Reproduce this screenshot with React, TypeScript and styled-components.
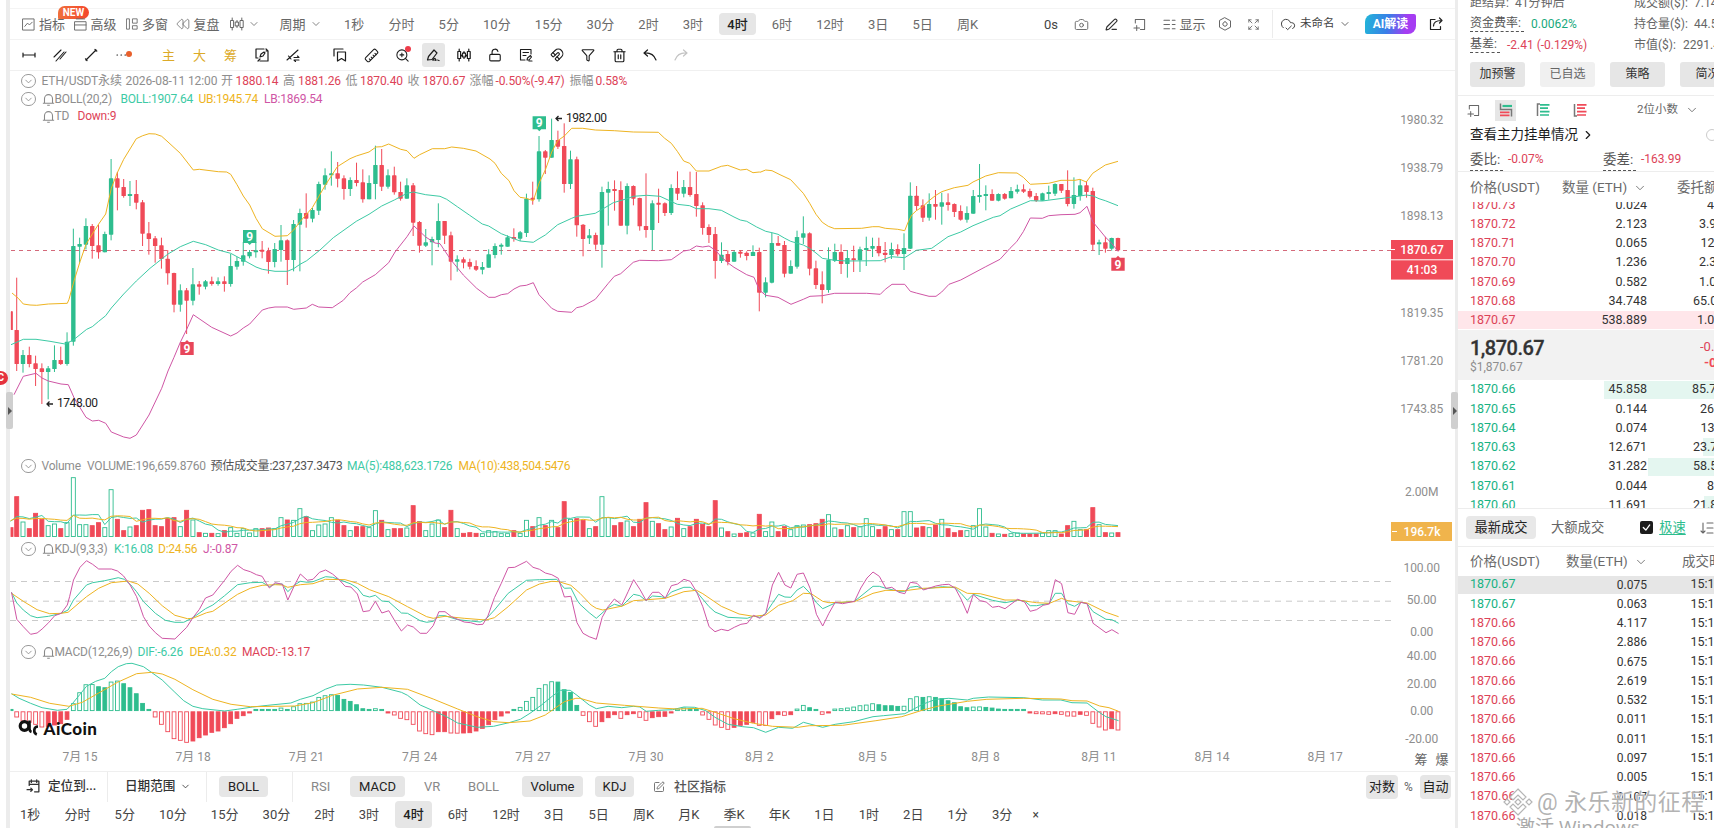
import React from "react";
import styled, { createGlobalStyle, css } from "styled-components";
import {
  Camera, ChevronDown, ChevronRight, CloudCheck, Funnel, LockOpen, Magnet, PenLine,
  Ruler, SquarePen, Trash2, ZoomIn, Rewind,
} from "lucide-react";

const GREEN = "#2ebd8e";
const RED = "#f04a58";
const TEXT_RED = "#dd4358";
const GOLD = "#eeb422";
const MINT = "#3dcaa5";
const PINK = "#cf56a5";
const GREY = "#8e8e8e";

const GlobalStyle = createGlobalStyle`
  * { box-sizing: border-box; }
  body {
    margin: 0;
    background: #fff;
    color: #333;
    font: 13px/1 Roboto, "Noto Sans CJK SC", sans-serif;
    white-space: nowrap;
    overflow: hidden;
  }
  svg { flex: none; }
`;

/* ---------- page frame ---------- */
const Page = styled.div`
  position: relative;
  display: flex;
  width: 1714px;
  height: 828px;
  overflow: hidden;
`;
const Rail = styled.div<{ $w: number }>`
  flex: none;
  width: ${(p) => p.$w}px;
`;
const Splitter = styled.div<{ $w: number }>`
  flex: none;
  width: ${(p) => p.$w}px;
  background: #ececec;
`;
const Main = styled.main`
  display: flex;
  flex-direction: column;
  width: 1445px;
  flex: none;
`;
const Handle = styled.div<{ $x: number }>`
  position: absolute;
  left: ${(p) => p.$x}px;
  top: 392px;
  width: 7px;
  height: 37px;
  border-radius: 2px;
  background: #cfcfcf;
  display: grid;
  place-items: center;
  &::after {
    content: "";
    border-left: 4px solid #555;
    border-top: 4px solid transparent;
    border-bottom: 4px solid transparent;
  }
`;
const EdgeBadge = styled.div`
  position: absolute;
  left: -7px;
  top: 371px;
  width: 15px;
  height: 14px;
  border-radius: 50%;
  background: #e5323e;
  color: #fff;
  font-weight: 700;
  font-size: 10px;
  line-height: 14px;
  text-align: right;
  padding-right: 4px;
`;

/* ---------- toolbars ---------- */
const TopBar = styled.div`
  display: flex;
  align-items: center;
  height: 31px;
  margin-top: 8px;
  border-top: 1px solid #f4f4f4;
  color: #666;
`;
const Tool = styled.div<{ $w: number; $c?: string; $pl?: number; $fs?: number }>`
  display: flex;
  align-items: center;
  position: relative;
  flex: none;
  width: ${(p) => p.$w}px;
  padding-left: ${(p) => p.$pl || 0}px;
  font-size: ${(p) => p.$fs || 13}px;
  gap: 4px;
  color: ${(p) => p.$c || "inherit"};
`;
const NewTag = styled.span`
  position: absolute;
  left: 48px;
  top: -12px;
  width: 31px;
  height: 13px;
  border-radius: 7px 7px 7px 1px;
  background: linear-gradient(90deg, #f0703c, #f4472c);
  color: #fff;
  font: 700 10px/13px Roboto, sans-serif;
  text-align: center;
`;
const Period = styled.span<{ $on?: boolean; $h: number }>`
  display: flex;
  align-items: center;
  flex: none;
  height: ${(p) => p.$h}px;
  padding: 0 8px;
  border-radius: 4px;
  ${(p) => p.$on && css`background: #e6e6e6; color: #222; font-weight: 500;`}
`;
const Close = styled.span`
  margin-left: 4px;
  font-size: 12px;
`;
const Periods = styled.div<{ $w?: number; $c: string }>`
  display: flex;
  align-items: center;
  gap: 8.15px;
  color: ${(p) => p.$c};
  ${(p) => p.$w && css`width: ${p.$w}px; flex: none;`}
`;
const AiButton = styled.span`
  width: 51px;
  height: 20px;
  border-radius: 8px 2px 8px 2px;
  background: linear-gradient(100deg, #21b6d8, #3a7de8 45%, #a53df2 80%);
  color: #fff;
  font: 700 12px/20px Roboto, "Noto Sans CJK SC", sans-serif;
  text-align: center;
`;
const VRule = styled.i<{ $h: number }>`
  flex: none;
  width: 1px;
  height: ${(p) => p.$h}px;
  background: #ececec;
`;
const DrawBar = styled.div`
  display: flex;
  align-items: center;
  height: 32px;
  padding-left: 3.5px;
  border-top: 1px solid #f2f2f2;
  border-bottom: 1px solid #f0f0f0;
  color: #1c1c1c;
`;
const Slot = styled.span<{ $after?: number; $c?: string }>`
  position: relative;
  display: grid;
  place-items: center;
  width: 31px;
  flex: none;
  margin-right: ${(p) => p.$after || 0}px;
  color: ${(p) => p.$c || "inherit"};
`;
const ActiveSlot = styled.span`
  display: grid;
  place-items: center;
  width: 23px;
  height: 24px;
  border-radius: 3px;
  background: #e6e6e6;
`;
const Turned = styled.span`
  display: grid;
  transform: rotate(90deg);
`;
const Dot = styled.i<{ $x: number; $y: number; $c: string }>`
  position: absolute;
  left: ${(p) => p.$x}px;
  top: ${(p) => p.$y}px;
  width: 6px;
  height: 6px;
  border-radius: 50%;
  background: ${(p) => p.$c};
`;

/* ---------- chart ---------- */
const ChartArea = styled.section`
  position: relative;
  height: 700px;
  svg.plot { display: block; }
`;
const Legend = styled.div<{ $top: number; $tight?: boolean }>`
  position: absolute;
  left: 11px;
  top: ${(p) => p.$top}px;
  height: 16px;
  display: flex;
  align-items: center;
  font-size: 12px;
  letter-spacing: ${(p) => (p.$tight ? -0.22 : -0.1)}px;
`;
const LegendToggle = styled.span<{ $hidden?: boolean }>`
  flex: none;
  width: 14.5px;
  height: 14.5px;
  margin-right: 6px;
  border: 1px solid #9a9a9a;
  border-radius: 50%;
  display: grid;
  place-items: center;
  color: #888;
  visibility: ${(p) => (p.$hidden ? "hidden" : "visible")};
`;
const LegendText = styled.span<{ $w: number; $c?: string }>`
  width: ${(p) => p.$w}px;
  flex: none;
  color: ${(p) => p.$c || GREY};
`;

/* ---------- footer ---------- */
const FooterRow = styled.div`
  display: flex;
  align-items: center;
  height: 30px;
  border-top: 1px solid #efefef;
  color: #888;
`;
const Cell = styled.span<{ $w: number; $c?: string; $b?: boolean; $pl?: number; $fs?: number; $gap?: number }>`
  display: flex;
  align-items: center;
  flex: none;
  gap: ${(p) => p.$gap || 6}px;
  width: ${(p) => p.$w}px;
  padding-left: ${(p) => p.$pl || 0}px;
  color: ${(p) => p.$c || "inherit"};
  font-weight: ${(p) => (p.$b ? 500 : 400)};
  ${(p) => p.$fs && css`font-size: ${p.$fs}px;`}
`;
const Pill = styled.span<{ $w: number; $h?: number; $after?: number }>`
  display: grid;
  place-items: center;
  flex: none;
  width: ${(p) => p.$w}px;
  height: ${(p) => p.$h || 21}px;
  margin-right: ${(p) => p.$after || 0}px;
  border-radius: 4px;
  background: #e6e6e6;
  color: #222;
`;
const PeriodRow = styled.div`
  display: flex;
  align-items: center;
  height: 27px;
  padding-left: 2px;
`;
const BottomGrip = styled.div`
  position: absolute;
  left: 714px;
  top: 826px;
  width: 37px;
  height: 4px;
  border-radius: 2px;
  background: #cfcfcf;
`;

/* ---------- sidebar ---------- */
const Side = styled.aside`
  display: flex;
  flex-direction: column;
  flex: none;
  width: 256px;
  overflow: hidden;
`;
const Stats = styled.div`
  flex: none;
  height: 54px;
  padding: 0 0 0 12px;
  font-size: 12px;
  color: #666;
  overflow: hidden;
`;
const StatLine = styled.div<{ $h: number }>`
  display: flex;
  align-items: flex-end;
  height: ${(p) => p.$h}px;
  padding-bottom: 1px;
`;
const StatCol = styled.span<{ $w: number; $c?: string; $lh?: number }>`
  flex: none;
  width: ${(p) => p.$w}px;
  color: ${(p) => p.$c || "inherit"};
  line-height: ${(p) => p.$lh || 16}px;
`;
const Dashed = styled.span<{ $fs?: number; $lh?: number }>`
  display: block;
  width: fit-content;
  font-size: ${(p) => p.$fs || 12}px;
  line-height: ${(p) => p.$lh || 16}px;
  padding-right: 3px;
  border-bottom: 1px dashed #555;
  color: #555;
`;
const Actions = styled.div`
  display: flex;
  flex: none;
  gap: 15px;
  padding: 8px 0 0 12px;
  height: 41px;
`;
const Action = styled.span<{ $pale?: boolean }>`
  flex: none;
  width: 55px;
  height: 25px;
  border-radius: 3px;
  background: ${(p) => (p.$pale ? "#f0f0f0" : "#e6e6e6")};
  color: ${(p) => (p.$pale ? "#666" : "#333")};
  font-size: 12px;
  line-height: 25px;
  text-align: center;
`;
const DepthBar = styled.div`
  display: flex;
  flex: none;
  align-items: center;
  height: 29px;
  padding-left: 9px;
  border-top: 1px solid #ededed;
  color: #666;
  font-size: 12px;
`;
const DepthIcon = styled.span<{ $on?: boolean }>`
  display: grid;
  place-items: center;
  flex: none;
  width: 21px;
  height: 21px;
  margin-right: 16px;
  background: ${(p) => (p.$on ? "#e6e6e6" : "transparent")};
`;
const MainForce = styled.div`
  display: flex;
  flex: none;
  align-items: center;
  height: 22px;
  padding-left: 12px;
  gap: 3px;
  color: #1c1c1c;
  font-size: 13.5px;
`;
const Hint = styled.i`
  flex: none;
  margin-left: 108px;
  width: 12px;
  height: 12px;
  border: 1px solid #ccc;
  border-radius: 50%;
`;
const Ratio = styled.div`
  display: flex;
  flex: none;
  align-items: flex-end;
  height: 26px;
  padding-left: 12px;
  font-size: 12px;
  color: ${TEXT_RED};
  border-bottom: 1px solid #ededed;
`;
const ColHead = styled.div<{ $h: number }>`
  display: flex;
  flex: none;
  align-items: center;
  height: ${(p) => p.$h}px;
  padding: 2px 0 0 12px;
  color: #6a6a6a;
  font-size: 13.5px;
`;
const Rows = styled.div<{ $h: number; $end?: boolean }>`
  display: flex;
  flex-direction: column;
  justify-content: ${(p) => (p.$end ? "flex-end" : "flex-start")};
  height: ${(p) => p.$h}px;
  flex: none;
  overflow: hidden;
`;
const Row = styled.div<{ $bg?: string; $from?: number }>`
  display: flex;
  align-items: center;
  flex: none;
  height: 19.28px;
  padding-left: 12px;
  font-size: 12.5px;
  color: #333;
  background: ${(p) => (p.$bg ? `linear-gradient(${p.$bg},${p.$bg}) ${p.$from || 0}px 50% / 256px 18px no-repeat` : "none")};
`;
const Price = styled.span<{ $up?: boolean }>`
  flex: none;
  width: 77px;
  color: ${(p) => (p.$up ? "#17b283" : TEXT_RED)};
`;
const Amount = styled.span<{ $small?: boolean }>`
  flex: none;
  width: 100px;
  text-align: right;
  font-size: ${(p) => (p.$small ? 12 : 12.5)}px;
`;
const Tail = styled.span<{ $x: number }>`
  flex: none;
  margin-left: ${(p) => p.$x}px;
`;
const Last = styled.div`
  display: flex;
  justify-content: space-between;
  align-items: center;
  height: 50px;
  flex: none;
  padding-left: 12px;
  background: #f2f2f2;
`;
const LastPrice = styled.div`
  font-size: 20px;
  font-weight: 500;
  letter-spacing: -0.5px;
  color: #333;
  -webkit-text-stroke: 0.3px #333;
  small {
    display: block;
    margin-top: 3px;
    font-size: 12px;
    font-weight: 400;
    letter-spacing: 0;
    color: #8e8e8e;
    -webkit-text-stroke: 0;
  }
`;
const Change = styled.div`
  width: 14px;
  overflow: hidden;
  color: ${TEXT_RED};
  font-size: 13px;
  line-height: 16px;
  b { display: block; padding-left: 4px; color: ${RED}; }
`;
const Tabs = styled.div`
  display: flex;
  align-items: center;
  height: 39px;
  flex: none;
  padding-left: 8px;
  border-top: 1px solid #ededed;
  border-bottom: 1px solid #ededed;
  color: #666;
  font-size: 13.3px;
`;
const Tab = styled.span`
  width: 70px;
  height: 23px;
  margin-right: 15px;
  border-radius: 4px;
  background: #e8e8e8;
  color: #222;
  line-height: 23px;
  text-align: center;
`;
const Check = styled.span`
  width: 13px;
  height: 13px;
  margin: 0 6px 0 36px;
  border-radius: 2px;
  background: #1c1c1c;
  color: #fff;
  display: grid;
  place-items: center;
`;
const Speed = styled.u`
  color: ${GREEN};
  text-decoration-thickness: 1px;
  text-underline-offset: 2px;
  margin-right: 14px;
`;
const Watermark = styled.div`
  position: absolute;
  left: 1503px;
  top: 788px;
  display: flex;
  align-items: center;
  gap: 4px;
  height: 28px;
  color: rgba(165, 165, 165, 0.85);
  font-size: 23px;
  letter-spacing: 0.4px;
  text-shadow: 0 0 1px #fff, 1px 1px 1px rgba(255, 255, 255, 0.9);
`;
const SystemMark = styled.div`
  position: absolute;
  left: 1516px;
  top: 815px;
  color: #aaa;
  font: 19px/24px "Open Sans", "Noto Sans CJK SC", sans-serif;
`;

/* ---------- small drawings ---------- */
const Glyph = ({ d, s = 14, w = 1.2, box = 14 }: { d: string; s?: number; w?: number; box?: number }) => (
  <svg width={s} height={s} viewBox={`0 0 ${box} ${box}`} fill="none" stroke="currentColor" strokeWidth={w} strokeLinecap="round" strokeLinejoin="round">
    <path d={d} />
  </svg>
);
const CANDLES_ICON = "M2.200 1v2.500M2.200 10.500V13M.8 3.500h2.800v7H.8zM7 3.500V5M7 9v1.500M5.600 5h2.800v4H5.600zM11.800 1v2.500M11.800 10.500V13M10.400 3.500h2.800v7h-2.800z";
const FRAME_ICON = "M2.500 5.500V1.500h10v11H8M4 8v5.500M1 10.700h6";
const Bell = () => (
  <svg width="13" height="13" viewBox="0 0 12 12" fill="none" stroke="#888" strokeWidth="1">
    <path d="M.8 9.500h10.400M2.300 9.500V5.200a3.700 3.700 0 0 1 7.400 0v4.300M4.800 11.300h2.400" />
  </svg>
);
const Toggle = ({ hidden }: { hidden?: boolean }) => (
  <LegendToggle $hidden={hidden}><ChevronDown size={11} strokeWidth={1.800} /></LegendToggle>
);

/* ---------- chart data ---------- */
const X0 = 16.7;
const STEP = 6.293;
const xAt = (i: number) => X0 + STEP * i;

// direction, high, body top, body bottom, low; thirds of a pixel below the pane's top
const CANDLES = `r664,664,720,720 r563,720,822,843 g780,795,822,848 r770,795,822,832 r797,820,837,888 r820,835,846,942 g828,835,846,928 g766,810,837,846 r770,810,822,825 g727,755,822,827 g416,468,755,767
g443,462,470,518 g385,408,464,478 r402,408,468,506 r404,466,487,506 g425,432,487,487 g207,265,434,451 r246,265,293,361 r267,291,318,323 g273,312,317,348 r270,312,338,358
r330,337,431,468 r396,430,447,494 r438,445,468,518 r443,466,507,536 r480,506,550,584 r548,549,644,667 g583,601,644,665 r594,601,632,732 g534,583,632,646 r573,583,590,614
g570,574,590,598 r560,574,582,587 g562,574,582,587 r559,574,582,605 g492,528,582,590 g501,513,530,539 g456,496,515,527 g480,486,499,505 g456,481,487,503 r453,479,485,505
r473,483,516,551 g459,477,516,532 g405,451,480,515 r448,451,510,585 g390,402,510,544 g356,369,404,544 r310,369,386,413 g354,360,386,397 g275,282,362,375 g235,256,284,299
g184,250,256,287 r216,250,266,292 r256,265,297,329 g262,270,297,318 r218,270,279,289 r238,277,328,338 g256,279,328,328 g167,225,282,328 r177,225,290,303 g238,256,290,296
r230,256,307,314 r275,306,326,332 g265,286,326,326 r279,286,398,438 r393,396,467,488 g417,457,467,471 g440,447,457,526 g340,393,450,472 r393,393,437,462 r425,436,515,571
g496,508,515,545 r502,508,518,535 r506,516,530,538 r511,528,539,543 g516,531,539,553 g478,493,533,533 g460,468,495,505 g460,464,469,494 g436,442,470,470 r415,441,446,455
g423,427,446,453 g311,326,429,441 r275,323,329,344 g138,184,328,335 r180,184,203,252 g86,150,203,203 r122,150,170,177 r100,168,282,308 g182,208,282,297 r200,208,406,440
r402,404,447,499 g417,436,445,462 r428,435,464,479 g290,306,464,533 g275,297,308,407 r271,297,302,362 r274,300,407,407 g280,288,407,433 r286,288,326,346 r323,324,409,422
r250,408,420,443 g331,340,420,480 r296,338,343,399 r337,340,369,378 g283,294,369,375 r244,294,311,330 g270,291,311,322 r245,291,315,320 r246,312,348,380 r337,346,414,434
r403,411,435,459 r411,432,513,566 g457,494,513,519 r481,492,516,526 g482,486,515,515 r480,485,490,503 r484,488,498,511 g466,486,498,498 r473,486,608,664 g562,577,608,622
g429,459,578,580 r438,459,467,467 r453,465,551,562 g511,528,551,551 g422,441,530,536 g379,430,443,462 r427,430,536,556 r512,535,585,597 r544,583,600,640 g472,510,600,608
g461,486,512,516 r463,486,522,552 g480,504,522,563 r467,505,511,546 g470,478,511,546 g440,474,479,528 g443,468,476,501 r443,468,490,499 r456,488,495,517 g458,477,495,507
r463,477,493,499 g430,474,492,540 g277,317,476,477 r288,317,348,361 r328,346,383,396 g310,342,383,392 r300,342,350,389 g308,337,350,404 r310,337,345,362 r340,342,366,381
r346,363,389,392 g349,369,389,398 g300,318,371,371 g222,315,320,338 g286,312,317,361 r298,312,332,332 g310,312,332,334 r309,312,326,329 g291,303,325,325 g284,298,305,311
r283,298,305,309 r296,303,320,325 r309,318,332,336 g308,310,332,332 g287,306,311,329 g280,282,311,318 r282,282,302,309 r241,300,342,349 g262,315,342,356 g268,286,318,332
r274,286,306,323 r293,303,464,480 g449,457,463,495 r441,457,476,488 g443,444,476,482 r443,444,481,484`
  .split(/\s+/)
  .map((t, k) => ({ i: k - 1, up: t[0] === "g", v: t.slice(1).split(",").map(Number) }));

// bar heights in thirds of a pixel
const VOLUME = [
  28, 121, 45, 25, 71, 53, 34, 39, 25, 43, 178, 37, 37, 34, 43, 28, 142, 53, 19, 30, 34, 80, 82, 34, 31, 56, 58, 31, 80, 51, 13,
  11, 11, 10, 19, 28, 11, 25, 12, 25, 25, 27, 25, 58, 51, 50, 85, 61, 19, 36, 39, 58, 50, 34, 19, 31, 31, 28, 79, 50, 22,
  25, 25, 27, 94, 46, 19, 39, 51, 28, 80, 25, 11, 13, 11, 10, 19, 16, 10, 10, 19, 11, 50, 31, 58, 34, 50, 28, 106, 53, 55,
  50, 25, 31, 121, 58, 34, 43, 48, 31, 53, 103, 47, 40, 22, 30, 56, 25, 31, 53, 38, 31, 109, 27, 16, 9, 11, 13, 12, 68, 16,
  45, 16, 31, 22, 34, 36, 37, 40, 53, 67, 27, 22, 34, 28, 31, 55, 31, 22, 31, 22, 22, 76, 76, 27, 31, 28, 36, 53, 25, 13,
  19, 19, 34, 85, 30, 11, 9, 8, 10, 12, 9, 9, 9, 12, 19, 19, 9, 34, 47, 22, 22, 88, 37, 13, 12, 13,
];

const MACD = [
  5, -18, -30, -34, -40, -48, -46, -42, -38, -25, 23, 56, 80, 80.5, 74, 71, 88, 91, 83, 71, 53, 24, 5, -18, -40, -62, -83, -88, -94, -90, -80,
  -72, -64, -60, -50, -38, -22, -14, -5, 5, 5, 5, 5, 10, 5, 14, 23, 24, 28, 42, 47, 50, 48, 36, 30, 20, 8, 5, 8, 4, -5,
  -12, -22, -26, -40, -60, -68, -71, -62, -62, -66, -66.5, -66, -65, -60, -52, -41, -26, -15, -5, 5, 12, 30, 42, 69, 80, 89, 88, 65, 57, 18,
  -13, -32, -46, -32, -20, -11, -22, -11, -8, -19, -28, -20, -17, -16, -5, 7, 10, 8, 5, -12, -25, -42, -49, -55, -49, -43, -40, -34, -43,
  -43.5, -23, -11, -13, -11, 7, 18, 11, 4, -10, -4, 7, 8, 10, 13, 17, 19, 23, 20, 17, 17, 15, 15.5, 38, 44, 42, 44, 42, 38, 32,
  26, 14, 11, 13, 13.5, 12, 10, 7, 5, 5, 5, 5, -5, -8, -8.5, -10, -8, -10, -15, -15.5, -10, -13, -37, -48, -57, -53, -57,
];

type Seg = [x0: number, xScale: number, pts: string];
const line = (top: number, ...segs: Seg[]) =>
  "M" +
  segs
    .flatMap(([x0, k, pts]) =>
      pts.split(" ").map((p) => {
        const [x, y] = p.split(",").map(Number);
        return `${(x0 + x / k).toFixed(1)} ${(top + y / 3).toFixed(1)}`;
      }),
    )
    .join("L");
const L = 2.6133;
const R = 2.7034;

const UPPER = line(90,
  [0, 3, "36,609 55,625 70,642 90,645 110,646 145,642 202,640 207,628 223,570 240,515 258,463 277,432 296,402 317,372 334,295 352,248 371,208 390,177 409,146 428,137 447,131 466,132 485,139 504,156 541,190 580,240 598,238 655,245 680,246 692,253 711,284 730,318 749,345 768,385 787,416 825,439 862,437 881,420 900,395 937,353 975,287 1012,230 1050,206 1069,198 1107,186 1128,171 1145,170"],
  [380, 3, "26,162 62,178 81,182 102,205 119,194 157,176 194,176 215,171 250,175 288,183 330,207 345,220 364,250 387,272 402,302 420,322 439,325 460,332 477,280 496,240 515,186 533,152 553,138 575,115 608,115 646,120 703,122 760,126 835,127 854,145 874,160 892,184 911,213 929,220 949,243 987,243 1024,229 1043,226 1081,240 1100,238 1119,248 1138,246"],
  [760, 3, "0,247 17,240 36,242 60,254 92,269 130,310 149,340 168,373 187,397 205,409 224,416 305,415 338,410 357,410 376,415 413,418 434,422 445,395 455,375 469,362 488,350 507,332 526,317 545,305 583,293 624,286 639,276 677,258 715,248 771,249 790,262 811,283 866,280 903,271 945,271 960,268 979,276 998,250 1036,225 1074,214"]);
const MIDDLE = line(90,
  [0, 3, "33,764 70,748 108,748 150,754 195,762 220,750 260,718 277,710 296,694 317,677 334,654 371,612 409,573 450,535 504,492 541,470 580,454 617,464 655,480 692,490 730,510 768,531 787,538 825,544 862,544 881,536 900,523 920,512 960,480 1000,443 1069,394 1107,373 1145,348"],
  [380, 3, "43,330 81,310 100,306 137,314 180,319 200,328 232,350 269,376 307,402 326,408 364,431 402,446 420,453 460,457 477,446 496,435 533,404 575,385 590,379 646,370 685,347 700,338 741,326 760,319 800,316 840,319 892,343 929,347 949,356 987,356 1024,361 1062,381 1081,390 1100,394 1130,411"],
  [760, 3, "17,424 36,428 54,433 73,444 92,454 130,465 149,475 168,489 187,505 224,511 262,513 361,512 394,500 434,503 469,481 515,475 564,440 602,426 639,407 700,382 720,377 752,357 811,332 847,333 922,323 960,318 979,315 1000,318 1017,326 1036,332 1074,347"]);
const LOWER = line(90,
  [0, 3, "42,914 70,859 108,850 126,864 145,873 183,882 205,884 223,925 258,982 277,993 296,991 317,1000 334,1026 371,1041 390,1045 409,1035 428,1005 447,975 485,895 504,843 522,802 541,757 560,718 580,674 635,712 692,738 711,729 730,714 749,702 787,660 806,654 825,651 862,651 881,658 919,654 937,643 956,651 997,653 1030,631 1050,608 1069,594 1088,576 1126,554"],
  [380, 3, "26,518 45,486 81,440 102,408 137,441 165,459 180,461 213,510 250,555 290,595 326,622 345,622 364,614 383,611 402,597 420,588 439,586 460,578 477,614 515,655 533,664 575,667 590,653 608,649 646,628 685,580 703,559 722,551 760,517 779,511 835,512 874,509 911,483 929,480 949,468 968,471 987,468 1005,480 1024,500 1043,518 1062,532 1100,554 1122,562 1138,600"],
  [760, 3, "17,616 54,622 93,643 130,628 150,619 187,617 224,610 320,610 361,613 376,598 396,583 434,583 451,604 469,609 507,619 528,619 545,606 567,583 602,570 677,530 720,508 750,475 770,455 790,425 811,384 847,385 866,377 903,374 945,373 960,368 981,349 998,395 1017,418 1036,441 1055,460 1074,484"]);
const KDJ_J = line(450,
  [0, L, "30,427 44,508 61,530 80,553 97,549 110,537 127,518 143,497 160,490 176,465 182,440 192,390 209,352 226,332 242,343 258,357 291,357 307,363 323,378 340,405 357,440 375,500 390,528 406,548 424,565 457,567 488,532 504,503 521,478 537,444 556,435 587,391 604,364 621,346 637,359 654,365 670,374 685,379 696,400 704,414 719,398 738,403 752,450 770,405 785,372 803,391 818,388 835,367 851,360 869,372 885,388 902,409 917,411 934,432 949,485 966,482 981,454 998,489 1016,482 1033,515 1049,543 1065,525 1080,531 1098,550 1115,550 1132,527 1147,485 1163,485 1180,500 1213,516 1230,518 1247,524 1262,523 1275,498 1292,443 1310,400 1328,353 1345,352 1376,334 1393,352 1410,358 1425,369 1442,374 1459,385 1475,441 1492,439 1508,518"],
  [580, R, "8,550 25,560 44,568 60,502 76,470 93,447 113,465 130,425 145,389 162,418 179,452 196,427 213,427 231,444 247,407 264,402 281,388 298,394 315,425 332,470 349,530 365,545 382,538 400,542 417,532 435,523 452,520 469,496 486,505 502,491 520,405 537,367 554,405 570,414 587,373 604,369 622,415 639,493 656,528 673,490 690,457 710,461 742,454 759,414 776,384 792,366 809,379 827,415 843,412 862,427 878,431 893,397 911,400 928,420 962,408 980,404 997,403 1014,414 1030,447 1047,490 1063,434 1082,452 1098,456 1115,472 1132,469 1149,476 1183,448 1202,456 1217,484 1234,479 1252,466 1269,462 1285,389 1302,401 1319,488 1337,493 1354,457 1371,461 1387,520 1422,548 1438,539 1456,551"]);
const KDJ_K = line(450,
  [0, L, "30,427 44,459 61,480 80,497 97,503 127,499 160,490 178,480 192,450 226,405 242,398 274,392 309,383 325,388 342,405 357,425 375,455 406,490 432,511 457,517 480,517 504,503 537,476 556,465 587,437 621,404 654,398 685,397 704,410 719,402 738,402 752,425 770,405 785,394 803,397 818,395 851,380 869,382 885,388 917,402 934,414 949,436 966,441 981,436 998,453 1016,455 1049,489 1065,490 1098,512 1115,517 1132,514 1147,497 1163,497 1196,509 1230,513 1255,516 1270,507 1292,480 1328,430 1376,391 1410,389 1455,388 1475,415 1492,414 1508,450"],
  [580, R, "0,463 25,488 44,505 76,473 93,463 113,469 145,433 162,437 179,452 196,438 220,440 231,444 247,426 281,412 298,412 315,425 349,470 365,486 400,502 452,505 469,498 486,502 502,490 520,460 537,433 554,441 570,442 587,420 604,409 622,430 639,458 656,476 690,459 742,454 792,409 809,409 827,415 862,424 878,424 893,412 911,409 928,417 980,410 1014,413 1030,430 1047,451 1063,433 1115,451 1149,458 1183,451 1202,453 1217,467 1234,467 1269,460 1285,430 1302,430 1319,461 1337,469 1354,457 1371,461 1387,485 1422,508 1438,509 1456,520"]);
const KDJ_D = line(450,
  [0, L, "30,430 61,454 97,479 130,491 160,490 178,487 226,440 258,415 291,398 335,393 360,402 390,430 424,467 457,496 490,506 504,505 540,488 556,484 590,457 621,433 654,415 685,406 720,404 738,405 752,412 785,404 818,401 851,388 902,389 934,400 966,419 1016,440 1065,470 1115,500 1132,505 1163,499 1213,505 1270,510 1292,503 1328,470 1376,420 1410,402 1442,394 1460,395 1492,406"],
  [580, R, "0,430 30,465 44,475 62,480 115,468 145,452 231,445 281,425 315,421 332,431 382,469 430,492 469,499 502,495 537,466 575,452 604,430 625,431 656,454 673,458 742,455 792,430 827,421 878,422 928,415 1014,411 1047,430 1082,431 1149,450 1183,450 1234,458 1269,460 1302,445 1319,452 1371,459 1422,487 1456,500"]);
const DIF = line(450,
  [0, L, "30,731 50,745 80,760 110,773 150,781 175,778 190,760 209,733 226,709 250,694 274,685 291,665 309,650 330,641 345,640 375,650 397,668 424,690 457,727 480,752 504,769 530,776 587,783 620,778 660,771 700,766 760,759 785,748 818,737 850,718 880,705 915,703 950,705 998,712 1049,727 1065,736 1098,765 1132,782 1165,799 1196,819 1247,832 1290,829 1330,818 1360,808 1385,790 1415,765 1445,737 1465,721 1490,721 1508,736"],
  [580, R, "0,743 25,765 44,776 76,769 113,773 145,769 162,771 179,784 213,781 250,779 281,771 310,772 340,782 365,802 400,823 440,830 469,833 502,847 537,832 575,835 604,817 656,832 690,823 740,815 792,800 820,797 878,791 928,762 962,748 997,745 1047,750 1063,745 1105,741 1200,743 1250,750 1300,750 1330,758 1371,759 1387,773 1405,788 1422,800 1456,812"]);
const DEA = line(450,
  [0, L, "30,732 80,742 130,760 180,769 215,757 258,729 307,697 357,671 397,667 424,672 457,688 504,719 556,748 604,763 654,770 719,769 770,768 818,758 869,736 934,717 998,712 1065,718 1132,747 1196,777 1247,800 1290,815 1330,818 1385,813 1425,795 1475,755 1505,745"],
  [580, R, "0,745 44,759 120,766 213,774 264,777 330,775 365,787 420,807 469,820 520,829 590,832 620,827 710,826 800,812 870,800 930,779 970,768 1047,754 1100,748 1200,745 1300,747 1330,752 1371,753 1405,768 1430,773 1456,784"]);

const VOL_BASE = 536.5;
const average = (n: number) =>
  "M" +
  VOLUME.map((_, k) => {
    let sum = 0;
    for (let j = 0; j < n; j++) sum += k - j < 0 ? 50 : VOLUME[k - j];
    return `${Math.max(10.5, xAt(k - 1)).toFixed(1)} ${(VOL_BASE - sum / n / 3).toFixed(1)}`;
  }).join("L");

const AXIS: [string, number][] = [
  ["1980.32", 120], ["1938.79", 168], ["1898.13", 216], ["1819.35", 312.5], ["1781.20", 361], ["1743.85", 409],
  ["2.00M", 492], ["100.00", 568], ["50.00", 600], ["0.00", 631.5], ["40.00", 656], ["20.00", 683.5], ["0.00", 711], ["-20.00", 739],
];
const DATES = ["7月 15", "7月 18", "7月 21", "7月 24", "7月 27", "7月 30", "8月 2", "8月 5", "8月 8", "8月 11", "8月 14", "8月 17"];

const NineTag = ({ x, y, up }: { x: number; y: number; up?: boolean }) => (
  <g>
    <path fill={up ? GREEN : "#e8465a"} d={up
      ? `M${x - 6.7} ${y}h13.400v13h-4.700l-2 2l-2-2h-4.700z`
      : `M${x - 6.7} ${y}h4.700l2-2l2 2h4.700v13h-13.400z`} />
    <text x={x} y={y + 11} fill="#fff" fontSize="12" fontWeight="700" textAnchor="middle">9</text>
  </g>
);
const PointLabel = ({ x, y, label }: { x: number; y: number; label: string }) => (
  <g fill="#222">
    <path d={`M${x + 7} ${y}h-6m2.500-2.500l-2.500 2.500l2.500 2.500`} fill="none" stroke="#222" strokeWidth="1.300" />
    <text x={x + 11} y={y + 3} fontSize="12" textLength="41">{label}</text>
  </g>
);

const Plot = () => (
  <svg className="plot" width="1445" height="700" viewBox="10 71 1445 700">
    <path d="M11 250.500H1391" stroke="#d4697a" strokeWidth="1" strokeDasharray="4 4" />
    {CANDLES.map(({ i, up, v }) => {
      const c = up ? GREEN : RED;
      const x = i < 0 ? 11.800 : xAt(i);
      const w = i < 0 ? 2 : 4.400;
      const [hi, a, b, lo] = v.map((n) => 90 + n / 3);
      return (
        <g key={i} fill={c}>
          <rect x={x - 0.5} y={hi} width="1" height={lo - hi} />
          <rect x={x - w / 2} y={a} width={w} height={Math.max(2, b - a)} rx="0.600" />
        </g>
      );
    })}
    <g fill="none" strokeWidth="1" strokeLinejoin="round">
      <path d={UPPER} stroke={GOLD} />
      <path d={MIDDLE} stroke={MINT} />
      <path d={LOWER} stroke={PINK} />
    </g>
    <NineTag x={249.700} y={230} up />
    <NineTag x={539.300} y={116.300} up />
    <NineTag x={187} y={342} />
    <NineTag x={1118} y={257.800} />
    <PointLabel x={46} y={404} label="1748.00" />
    <PointLabel x={555} y={118.500} label="1982.00" />

    {VOLUME.map((h, k) => {
      const up = CANDLES[k].up;
      const x = k === 0 ? 12 : xAt(k - 1);
      const w = k === 0 ? 2 : 4;
      return (
        <rect key={k} x={x - w / 2} y={VOL_BASE - h / 3 + 0.500} width={w} height={Math.max(1, h / 3 - 0.500)}
          fill={up ? "#fff" : RED} stroke={up ? GREEN : RED} strokeWidth="0.900" />
      );
    })}
    <path d={average(5)} fill="none" stroke={MINT} />
    <path d={average(10)} fill="none" stroke={GOLD} />

    <path d="M10 581.500H1391M10 601.200H1391M10 620.500H1391" stroke="#bdbdbd" strokeWidth="0.800" strokeDasharray="6 5" />
    <g fill="none" strokeWidth="1" strokeLinejoin="round">
      <path d={KDJ_K} stroke={MINT} />
      <path d={KDJ_D} stroke={GOLD} />
      <path d={KDJ_J} stroke={PINK} />
    </g>

    {MACD.map((v, k) => {
      const up = v > 0;
      const prev = k ? MACD[k - 1] : v;
      const hollow = Math.abs(v) > 6 && (up ? v > prev : v < prev);
      const c = up ? GREEN : RED;
      const h = Math.max(1.200, Math.abs(v) / 3 - 0.800);
      const x = k === 0 ? 12 : xAt(k - 1);
      const w = k === 0 ? 2 : 3.800;
      return (
        <rect key={k} x={x - w / 2} y={up ? 710.600 - h : 711.800} width={w} height={h}
          fill={hollow ? "#fff" : c} stroke={c} strokeWidth="0.900" />
      );
    })}
    <g fill="none" strokeWidth="1" strokeLinejoin="round">
      <path d={DIF} stroke={MINT} />
      <path d={DEA} stroke={GOLD} />
    </g>

    <g fill={GREY} fontSize="12" textAnchor="middle">
      {AXIS.map(([t, y]) => <text key={t + y} x="1421.700" y={y + 4.300} letterSpacing="-0.1">{t}</text>)}
      {DATES.map((t, k) => <text key={t} x={80 + 113.200 * k} y="761">{t}</text>)}
    </g>
    <g fontSize="13" fill="#666" textAnchor="middle">
      <text x="1421" y="764">筹</text>
      <text x="1442" y="764">爆</text>
    </g>
    <g fontSize="12" fill="#fff" textAnchor="middle">
      <rect x="1391" y="240" width="62" height="19.300" fill={RED} />
      <rect x="1391" y="260.300" width="62" height="19.300" fill={RED} />
      <rect x="1391" y="522" width="61" height="19" fill="#f0b44c" />
      <path d="M1391 249.500h4M1392 531.500h5" stroke="#fff" />
      <text x="1422" y="254" fontWeight="500" letterSpacing="-0.1">1870.67</text>
      <text x="1422" y="274" fontWeight="500">41:03</text>
      <text x="1422" y="536" fontWeight="500">196.7k</text>
    </g>
    <g fill="none" stroke="#111" strokeWidth="3.200">
      <circle cx="24.500" cy="726" r="4.300" />
      <path d="M29.500 720.500v8c0 2 .6 3 2 3.500" strokeWidth="2.600" />
      <path d="M38 726.500c-4.500 0-5 6.500-1.200 8" strokeWidth="2.600" />
    </g>
    <text x="43.500" y="734.500" fontSize="17" fontWeight="900" fontFamily="Lato" textLength="53.500" fill="#111">AiCoin</text>
  </svg>
);

/* ---------- content ---------- */
const TOP_PERIODS = ["1秒", "分时", "5分", "10分", "15分", "30分", "2时", "3时", "4时", "6时", "12时", "3日", "5日", "周K"];
const BOTTOM_PERIODS = ["1秒", "分时", "5分", "10分", "15分", "30分", "2时", "3时", "4时", "6时", "12时", "3日", "5日", "周K", "月K", "季K", "年K", "1日", "1时", "2日", "1分", "3分"];

type Item = [text: string, width: number, color?: string];
const LEGENDS: { top: number; bell?: boolean; bare?: boolean; tight?: boolean; items: Item[] }[] = [
  { top: 2, items: [["ETH/USDT永续", 84], ["2026-08-11 12:00", 95.5], ["开", 14.5], ["1880.14", 47.5, TEXT_RED], ["高", 15], ["1881.26", 47.5, TEXT_RED], ["低", 14.5], ["1870.40", 47.5, TEXT_RED], ["收", 15], ["1870.67", 47, TEXT_RED], ["涨幅", 26], ["-0.50%(-9.47)", 74, TEXT_RED], ["振幅", 26], ["0.58%", 34, TEXT_RED]] },
  { top: 20, bell: true, tight: true, items: [["BOLL(20,2)", 66], ["BOLL:1907.64", 78, MINT], ["UB:1945.74", 65.5, GOLD], ["LB:1869.54", 60, PINK]] },
  { top: 37, bell: true, tight: true, bare: true, items: [["TD", 23], ["Down:9", 40, TEXT_RED]] },
  { top: 387, tight: true, items: [["Volume", 45.5], ["VOLUME:196,659.8760", 123.5], ["预估成交量:237,237.3473", 136.5, "#555"], ["MA(5):488,623.1726", 111.5, MINT], ["MA(10):438,504.5476", 112, GOLD]] },
  { top: 470, bell: true, tight: true, items: [["KDJ(9,3,3)", 59.5], ["K:16.08", 44, MINT], ["D:24.56", 45, GOLD], ["J:-0.87", 36, PINK]] },
  { top: 573, bell: true, tight: true, items: [["MACD(12,26,9)", 83], ["DIF:-6.26", 52, MINT], ["DEA:0.32", 52.5, GOLD], ["MACD:-13.17", 68, TEXT_RED]] },
];

type Order = [price: string, amount: string, tail: string, x: number, bg?: string, from?: number];
const ASKS: Order[] = [
  ["1870.73", "0.024", "4.5", 60], ["1870.72", "2.123", "3.97", 52], ["1870.71", "0.065", "121", 53.5], ["1870.70", "1.236", "2.31", 52],
  ["1870.69", "0.582", "1.08", 52], ["1870.68", "34.748", "65.00", 46], ["1870.67", "538.889", "1.00", 50, "#ffe6ea"],
];
const BIDS: Order[] = [
  ["1870.66", "45.858", "85.78", 45, "#e4f6f0", 146], ["1870.65", "0.144", "269", 53], ["1870.64", "0.074", "138", 53.5], ["1870.63", "12.671", "23.70", 46, "#e4f6f0", 245],
  ["1870.62", "31.282", "58.51", 46, "#e4f6f0", 190], ["1870.61", "0.044", "82", 60], ["1870.60", "11.691", "21.87", 46, "#e4f6f0", 246],
];
const TRADES: [string, string][] = [
  ["1870.67", "0.075"], ["1870.67", "0.063"], ["1870.66", "4.117"], ["1870.66", "2.886"], ["1870.66", "0.675"], ["1870.66", "2.619"], ["1870.66", "0.532"],
  ["1870.66", "0.011"], ["1870.66", "0.011"], ["1870.66", "0.097"], ["1870.66", "0.005"], ["1870.66", "0.107"], ["1870.66", "0.018"],
];

const Orders = ({ list, up }: { list: Order[]; up?: boolean }) => (
  <>
    {list.map(([p, a, t, x, bg, from]) => (
      <Row key={p} $bg={bg} $from={from}>
        <Price $up={up}>{p}</Price><Amount>{a}</Amount><Tail $x={x}>{t}</Tail>
      </Row>
    ))}
  </>
);

const DepthGlyph = ({ kind }: { kind: "both" | "bids" | "asks" }) => (
  <svg width="14" height="14" viewBox="0 0 14 14" fill="none" strokeWidth="1.500">
    {kind === "both" ? (
      <>
        <path d="M1.500 .5v6h11v7" stroke="#777" />
        <path d="M3.500 3h9.500" stroke={GREEN} strokeWidth="2.200" />
        <path d="M1 9.300h9.500M1 12.300h9.500" stroke={RED} strokeWidth="1.700" />
      </>
    ) : (
      <>
        <path d={kind === "bids" ? "M4 1H1.500v12" : "M1.500 1v12H4"} stroke="#777" />
        <path d="M4 1.800h9.500M4 5.200h8M4 8.600h9.500M4 12h9" stroke={kind === "bids" ? GREEN : RED} strokeWidth="1.700" />
      </>
    )}
  </svg>
);

export default function App() {
  return (
    <Page>
      <GlobalStyle />
      <Rail $w={6} /><Splitter $w={4} />
      <Main>
        <TopBar>
          <Tool $w={63.500} $pl={12}>
            <Glyph s={13} d="M1 1h12v12H1zM3 9l3-3.500l2 2L11 4.500" w={1} />指标
            <NewTag>NEW</NewTag>
          </Tool>
          <Tool $w={52.500}><Glyph s={13} d="M1 4h12v9H1zM1 7.500h12M2.500 1h9" w={1} />高级</Tool>
          <Tool $w={49.500}><Glyph s={12} d="M1 1h3v12h-3zM8 1h5v5h-5zM8 9h5v4h-5z" w={1} />多窗</Tool>
          <Tool $w={54}><Rewind size={14} strokeWidth={1.300} />复盘</Tool>
          <Tool $w={50}><Glyph d={CANDLES_ICON} w={1} /><ChevronDown size={12} strokeWidth={1.600} /></Tool>
          <Tool $w={56.500}>周期<ChevronDown size={12} strokeWidth={1.600} /></Tool>
          <Periods $w={708} $c="#6a6a6a">
            {TOP_PERIODS.map((p) => <Period key={p} $h={22} $on={p === "4时"}>{p}</Period>)}
          </Periods>
          <Tool $w={29.500} $c="#444">0s</Tool>
          <Tool $w={31}><Camera size={15} strokeWidth={1.500} /></Tool>
          <Tool $w={28} $c="#333"><PenLine size={13} strokeWidth={2.100} /></Tool>
          <Tool $w={30}><Glyph s={13} d={FRAME_ICON} w={1.100} /></Tool>
          <Tool $w={55.500}><Glyph s={13} d="M1 2.500h6M1 7h6M1 11.500h6M10 2.500h3M10 7h3M10 11.500h3" w={1.100} />显示</Tool>
          <Tool $w={30}><Glyph d="M7 .8l5.500 3v6.400l-5.500 3l-5.500-3V3.800zM7 4.800a2.200 2.200 0 1 0 .01 0" w={1} /></Tool>
          <Tool $w={24}><Glyph s={11} d="M5 5L1 1M1 4V1h3M9 5l4-4M10 1h3v3M5 9l-4 4M1 10v3h3M9 9l4 4M13 10v3h-3" w={1.100} /></Tool>
          <VRule $h={28} />
          <Tool $w={92} $c="#444" $pl={7} $fs={11.500}>
            <CloudCheck size={16} strokeWidth={1.500} />未命名<ChevronDown size={12} strokeWidth={1.600} />
          </Tool>
          <Tool $w={63.500}><AiButton>AI解读</AiButton></Tool>
          <Tool $w={16} $c="#222"><Glyph d="M6 2.500H1.500v10h10V9.500M4.500 9c0-4 2.500-5.500 8-5.500M10.500 1l2.500 2.500L10.500 6" /></Tool>
        </TopBar>
        <DrawBar>
          <Slot><Glyph d="M1 7h12M1 5v4M13 5v4" /></Slot>
          <Slot><Glyph d="M1 9L8 2M3 13L11 4M7 11l6-7" w={1.100} /></Slot>
          <Slot><Glyph d="M2 12L12 2M1.500 10.800l1.500 1.700M11 1.500l1.800 1.500" /></Slot>
          <Slot $after={15.500}><Glyph d="M2 7h.5M6 7h.5M10 7h.5" /><Dot $x={19} $y={3} $c="#e8602c" /></Slot>
          <Slot $c="#dcaa28">主</Slot>
          <Slot $c="#dcaa28">大</Slot>
          <Slot $c="#dcaa28">筹</Slot>
          <Slot><Glyph d="M3 10H1V1h8M11 3h2v10H5M11 1l2 2M5 11l-2 2M5 9l1-3l3-2l1 1l-2 3z" /></Slot>
          <Slot $after={16.500}><Glyph d="M1 12L12 2M2.500 8l2.500 3M8 9.500h5l-1.500-1.500M13 12H8l1.500 1.500" w={1.100} /></Slot>
          <Slot><Glyph d="M1 8V1h9M4.500 4h8v9l-4-2.500l-4 2.500z" /></Slot>
          <Slot><Turned><Ruler size={15} strokeWidth={1.700} /></Turned></Slot>
          <Slot><ZoomIn size={15} strokeWidth={1.700} /><Dot $x={18} $y={-2} $c="#ee3c4a" /></Slot>
          <Slot><ActiveSlot><Glyph d="M1.500 12l1-3.500L8 2l3 3l-5 6.500zM7 12.500c1-3 3-3 2 0c2-1 2-1 4 0" /></ActiveSlot></Slot>
          <Slot><Glyph d={CANDLES_ICON + "M3.600 9l3.400-5l3.400 5"} w={1.200} /></Slot>
          <Slot><LockOpen size={14} strokeWidth={1.900} /></Slot>
          <Slot><Glyph d="M12 6V1.500H1.500V12H6M4 4.500h5.500M4 7.500h3M8 12l.5-2l3-2.500l1 1.500l-2.500 3zM10 13h3" w={1.100} /></Slot>
          <Slot><Magnet size={14} strokeWidth={1.900} /></Slot>
          <Slot><Funnel size={14} strokeWidth={1.900} /></Slot>
          <Slot><Trash2 size={15} strokeWidth={1.900} /></Slot>
          <Slot><Glyph d="M4.500 2L1 5l3.500 3M1 5c6-.5 10 1.500 12 7" /></Slot>
          <Slot $c="#c4c4c4"><Glyph d="M9.500 2L13 5L9.500 8M13 5C7 4.500 3 6.500 1 12" /></Slot>
        </DrawBar>
        <ChartArea>
          <Plot />
          {LEGENDS.map(({ top, bell, bare, tight, items }) => (
            <Legend key={top} $top={top} $tight={tight}>
              <Toggle hidden={bare} />
              {bell && <Bell />}
              {items.map(([t, w, c]) => <LegendText key={t} $w={w} $c={c}>{t}</LegendText>)}
            </Legend>
          ))}
        </ChartArea>
        <FooterRow>
          <Cell $w={97} $c="#333" $b $pl={16} $gap={7} $fs={12.600}><Glyph s={15} d="M3 6V2h9v10H8M5 .8v2.400M10 .8v2.400M3 5h9M1 10h5M4.500 8.500L6 10l-1.500 1.500" />定位到...</Cell>
          <VRule $h={30} />
          <Cell $w={98} $c="#333" $b $pl={17} $fs={12.600} $gap={5}>日期范围<ChevronDown size={11} strokeWidth={1.800} /></Cell>
          <VRule $h={30} />
          <Cell $w={12} />
          <Pill $w={49} $after={24}>BOLL</Pill>
          <VRule $h={30} />
          <Cell $w={18} />
          <Cell $w={39}>RSI</Cell>
          <Pill $w={55} $after={19}>MACD</Pill>
          <Cell $w={44}>VR</Cell>
          <Cell $w={54}>BOLL</Cell>
          <Pill $w={61} $after={12}>Volume</Pill>
          <Pill $w={39} $after={19}>KDJ</Pill>
          <Cell $w={713} $c="#555" $b $gap={9}><SquarePen size={12} strokeWidth={1.600} />社区指标</Cell>
          <Pill $w={32} $h={24} $after={6}>对数</Pill>
          <Cell $w={16} $c="#666" $fs={12}>%</Cell>
          <Pill $w={31} $h={24}>自动</Pill>
        </FooterRow>
        <PeriodRow>
          <Periods $c="#444">
            {BOTTOM_PERIODS.map((p) => <Period key={p} $h={27} $on={p === "4时"}>{p}</Period>)}
            <Close>×</Close>
          </Periods>
        </PeriodRow>
      </Main>
      <Splitter $w={3} />
      <Side>
        <Stats>
          <StatLine $h={12}><StatCol $w={45}>距结算:</StatCol><StatCol $w={119}>41分钟后</StatCol><StatCol $w={60}>成交额($):</StatCol><StatCol $w={40}>7.14</StatCol></StatLine>
          <StatLine $h={21}><StatCol $w={61}><Dashed>资金费率:</Dashed></StatCol><StatCol $w={103} $c="#17a97c">0.0062%</StatCol><StatCol $w={60}>持仓量($):</StatCol><StatCol $w={40}>44.5</StatCol></StatLine>
          <StatLine $h={21}><StatCol $w={37}><Dashed>基差:</Dashed></StatCol><StatCol $w={127} $c={TEXT_RED}>-2.41 (-0.129%)</StatCol><StatCol $w={49}>市值($):</StatCol><StatCol $w={50}>2291.4</StatCol></StatLine>
        </Stats>
        <Actions><Action>加预警</Action><Action $pale>已自选</Action><Action>策略</Action><Action>简况</Action></Actions>
        <DepthBar>
          <Cell $w={28}><Glyph s={13} d={FRAME_ICON} w={1.100} /></Cell>
          <DepthIcon $on><DepthGlyph kind="both" /></DepthIcon>
          <DepthIcon><DepthGlyph kind="bids" /></DepthIcon>
          <DepthIcon><DepthGlyph kind="asks" /></DepthIcon>
          <Cell $w={105} $pl={31} $fs={11.500} $gap={7}>2位小数<ChevronDown size={14} strokeWidth={1.500} /></Cell>
        </DepthBar>
        <MainForce>查看主力挂单情况<ChevronRight size={14} strokeWidth={2} /><Hint /></MainForce>
        <Ratio>
          <StatCol $w={38}><Dashed $fs={13.500} $lh={22}>委比:</Dashed></StatCol><StatCol $w={95} $lh={23}>-0.07%</StatCol>
          <StatCol $w={38}><Dashed $fs={13.500} $lh={22}>委差:</Dashed></StatCol><StatCol $w={50} $lh={23}>-163.99</StatCol>
        </Ratio>
        <ColHead $h={30}><Cell $w={92}>价格(USDT)</Cell><Cell $w={115}>数量 (ETH)<ChevronDown size={14} strokeWidth={1.500} /></Cell><Cell $w={60}>委托额</Cell></ColHead>
        <Rows $h={128} $end><Orders list={ASKS} /></Rows>
        <Last>
          <LastPrice>1,870.67<small>$1,870.67</small></LastPrice>
          <Change>-0.50<b>-0.5</b></Change>
        </Last>
        <Rows $h={128}><Orders list={BIDS} up /></Rows>
        <Tabs>
          <Tab>最新成交</Tab>大额成交
          <Check><Glyph s={9} d="M2 7l4 4l6-8" w={2} /></Check><Speed>极速</Speed>
          <Glyph d="M3 2v10M1 10l2 2l2-2M7 2h6M7 7h6M7 12h6" w={1.100} />
        </Tabs>
        <ColHead $h={28}><Cell $w={96}>价格(USDT)</Cell><Cell $w={116}>数量(ETH)<ChevronDown size={14} strokeWidth={1.500} /></Cell><Cell $w={60}>成交时间</Cell></ColHead>
        <Rows $h={253}>
          {TRADES.map(([p, a], k) => (
            <Row key={k} $bg={k === 0 ? "#e6e6e6" : undefined}>
              <Price $up={k < 2}>{p}</Price><Amount $small>{a}</Amount><Tail $x={43.500}>15:18</Tail>
            </Row>
          ))}
        </Rows>
      </Side>
      <Handle $x={6} />
      <Handle $x={1451} />
      <EdgeBadge>C</EdgeBadge>
      <BottomGrip />
      <SystemMark>激活 Windows</SystemMark>
      <Watermark>
        <svg width="30" height="30" viewBox="0 0 30 30" fill="#fff" stroke="#b5b5b5" strokeWidth="1.200">
          <path d="M15 2l8 8l-3 3l-5-5l-5 5l-3-3zM15 28l8-8l-3-3l-5 5l-5-5l-3 3zM15 12l3 3l-3 3l-3-3zM4 12l3 3l-3 3l-3-3zM26 12l3 3l-3 3l-3-3z" />
        </svg>
        <span>@ 永乐新的征程</span>
      </Watermark>
    </Page>
  );
}
